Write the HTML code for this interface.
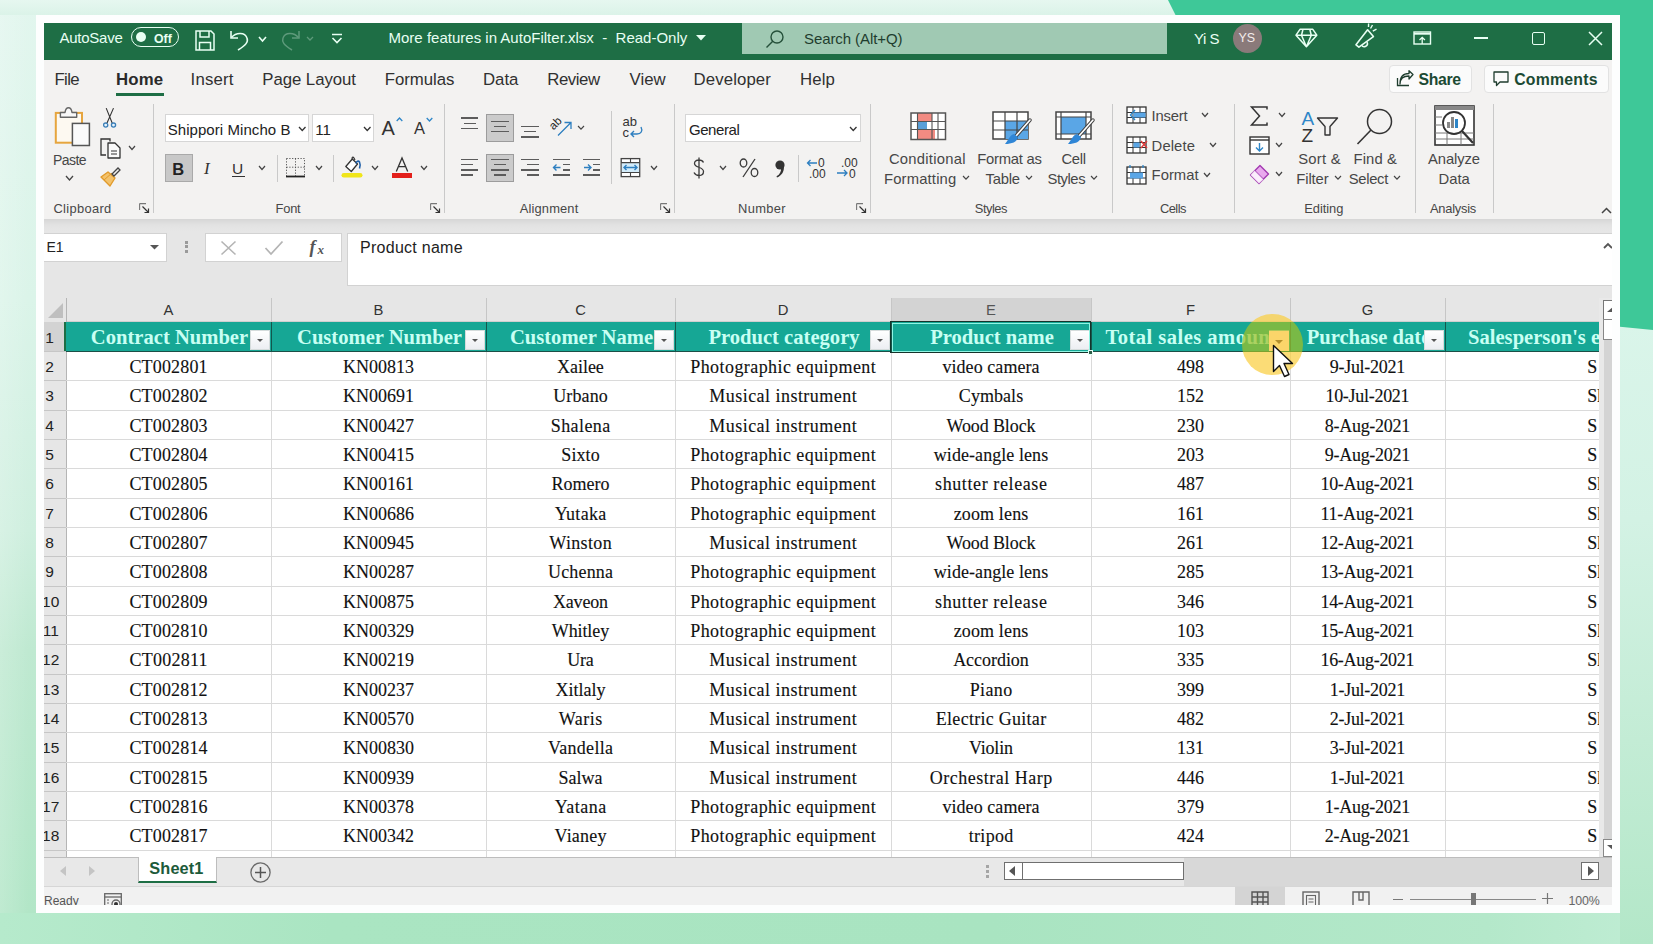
<!DOCTYPE html>
<html><head><meta charset="utf-8"><style>
*{margin:0;padding:0;box-sizing:border-box}
html,body{width:1653px;height:944px;overflow:hidden}
body{position:relative;font-family:"Liberation Sans",sans-serif;background:#d9f2e6}
.a{position:absolute}
svg.a{overflow:visible}
.t{position:absolute;white-space:pre;line-height:1}
.hd{font-family:"Liberation Serif",serif;font-weight:700;font-size:20.6px;color:#c8fff3}
.cd{font-family:"Liberation Serif",serif;font-size:18px;color:#111;-webkit-text-stroke:0.12px #111}
.rn{font-size:15.5px;color:#222}
.fb{width:20px;height:20px;background:linear-gradient(180deg,#ffffff,#eceef2);border:1px solid #d5dcdc}
.fb i{position:absolute;left:6px;top:8px;width:0;height:0;border-left:3.6px solid transparent;border-right:3.6px solid transparent;border-top:3.8px solid #555}
</style></head><body>
<div class="a" style="left:0;top:0;width:1653px;height:944px;background:linear-gradient(180deg,#e1f5ed 0px,#dcf3e9 240px,#d0efdf 480px,#bdead0 650px,#ade5c3 944px)"></div>
<div class="a" style="left:0;top:0;width:36px;height:913px;background:linear-gradient(180deg,#e2f6ee 0px,#dbf4e9 300px,#cfefdf 530px,#bfe9d1 650px,#b2e6c7 913px)"></div>
<div class="a" style="left:0;top:0;width:36px;height:913px;background:linear-gradient(90deg,rgba(255,255,255,0.18),rgba(255,255,255,0) 80%)"></div>
<div class="a" style="left:0;top:913px;width:1653px;height:31px;background:linear-gradient(90deg,#b6eacc 0%,#aae5c2 20%,#a9e4c1 60%,#b4e8ca 90%,#c0edd4 100%)"></div>
<div class="a" style="left:1620px;top:320px;width:33px;height:624px;background:linear-gradient(180deg,#daf5ea 0px,#d3f2e4 200px,#c3ecd5 420px,#b3e7c8 624px)"></div>
<div class="a" style="left:0;top:0;width:1653px;height:15px;background:linear-gradient(180deg,#e6f7f0,#dbf3e8)"></div>
<div class="a" style="left:0;top:0;width:1653px;height:944px;background:#3ec898;clip-path:polygon(1168px 0,1653px 0,1653px 330px,1620px 326.7px,1200px 64px)"></div>
<div class="a" style="left:36px;top:15px;width:1584px;height:898px;background:#fdfefe"></div>
<div class="a" style="left:44px;top:23px;width:1568px;height:882px;overflow:hidden;background:#f3f2f1">
<div class="a" style="left:0.0px;top:0.0px;width:1568.0px;height:36.8px;background:#1e6e45"></div>
<div class="t" style="left:15.5px;top:7.1px;font-size:15px;color:#e8fff3;font-weight:400;font-family:'Liberation Sans',sans-serif;letter-spacing:-0.256px;">AutoSave</div>
<div class="a" style="left:87.0px;top:4.0px;width:48.0px;height:20.0px;border:1.5px solid #e8fff3;border-radius:10px"></div>
<div class="a" style="left:92.0px;top:9.0px;width:10.0px;height:10.0px;background:#e8fff3;border-radius:50%"></div>
<div class="t" style="left:110.0px;top:9.6px;font-size:12.3px;color:#e8fff3;font-weight:700;font-family:'Liberation Sans',sans-serif;">Off</div>
<svg class="a" style="left:151.0px;top:6.5px;" width="20" height="21" viewBox="0 0 20 21" fill="none"><path d="M1 1 H16 L19 4 V20 H1 Z" stroke="#e8fff3" stroke-width="1.5"/><path d="M5 1 V7 H14 V1" stroke="#e8fff3" stroke-width="1.5"/><path d="M4.5 20 V12.5 H15.5 V20" stroke="#e8fff3" stroke-width="1.5"/></svg>
<svg class="a" style="left:185.0px;top:6.0px;" width="22" height="22" viewBox="0 0 22 22" fill="none"><path d="M2 2 V9 H9" stroke="#e8fff3" stroke-width="1.6" fill="none"/><path d="M2.5 8.5 C7 3 16 3 18 9 C19.5 13 17 16 9 21" stroke="#e8fff3" stroke-width="1.6" fill="none"/></svg>
<svg class="a" style="left:213.5px;top:12.5px;" width="9" height="6" viewBox="0 0 9 6" fill="none"><path d="M1 1 L4.5 5 L8 1" stroke="#e8fff3" stroke-width="1.6"/></svg>
<svg class="a" style="left:235.0px;top:6.0px;" width="22" height="22" viewBox="0 0 22 22" fill="none"><path d="M20 2 V9 H13" stroke="#5e9a7b" stroke-width="1.5" fill="none"/><path d="M19.5 8.5 C15 3 6 3 4 9 C2.5 13 5 16 13 21" stroke="#5e9a7b" stroke-width="1.5" fill="none"/></svg>
<svg class="a" style="left:262.0px;top:13.0px;" width="8" height="5" viewBox="0 0 8 5" fill="none"><path d="M1 1 L4.0 4 L7 1" stroke="#5e9a7b" stroke-width="1.3"/></svg>
<svg class="a" style="left:287.0px;top:10.0px;" width="12" height="11" viewBox="0 0 12 11" fill="none"><path d="M1 1.5 H11" stroke="#e8fff3" stroke-width="1.5"/><path d="M1.5 5 L6 9.5 L10.5 5" stroke="#e8fff3" stroke-width="1.6"/></svg>
<div class="t" style="left:344.5px;top:6.9px;font-size:15.0px;color:#e8fff3;font-weight:400;font-family:'Liberation Sans',sans-serif;letter-spacing:0.008px;">More features in AutoFilter.xlsx  -  Read-Only</div>
<svg class="a" style="left:652.0px;top:11.5px;" width="10" height="6" viewBox="0 0 10 6" fill="none"><path d="M0 0 H10 L5 5.5 Z" fill="#e8fff3"/></svg>
<div class="a" style="left:698.0px;top:0.0px;width:425.0px;height:31.0px;background:#a0c9b3"></div>
<svg class="a" style="left:721.0px;top:6.0px;" width="20" height="20" viewBox="0 0 20 20" fill="none"><circle cx="12" cy="8" r="6" stroke="#25503a" stroke-width="1.4"/><path d="M8 12 L1.5 18.5" stroke="#25503a" stroke-width="1.5"/></svg>
<div class="t" style="left:760.0px;top:7.8px;font-size:15px;color:#1f3d2e;font-weight:400;font-family:'Liberation Sans',sans-serif;letter-spacing:-0.087px;">Search (Alt+Q)</div>
<div class="t" style="left:1150.0px;top:7.6px;font-size:15px;color:#e8fff3;font-weight:400;font-family:'Liberation Sans',sans-serif;letter-spacing:-0.488px;">Yi S</div>
<div class="a" style="left:1189.0px;top:1.0px;width:29.0px;height:29.0px;background:#8a7a7a;border-radius:50%"></div>
<div class="t" style="left:1194.5px;top:9.4px;font-size:12.5px;color:#f3ecec;font-weight:400;font-family:'Liberation Sans',sans-serif;">YS</div>
<svg class="a" style="left:1251.0px;top:4.5px;" width="23" height="20" viewBox="0 0 23 20" fill="none"><path d="M5 1.3 H17.8 L21.8 7.2 L11.4 18.7 L1 7.2 Z M1 7.2 H21.8 M8 1.3 L6.5 7.2 L11.4 18.7 L16.3 7.2 L14.8 1.3" stroke="#e8fff3" stroke-width="1.5" fill="none" stroke-linejoin="round"/></svg>
<svg class="a" style="left:1306.0px;top:-1.0px;" width="30" height="28" viewBox="0 0 30 28" fill="none"><path d="M6 22.8 L17.6 7.8 L23.4 14.6 L8.9 25.2 Z" stroke="#e8fff3" stroke-width="1.6" fill="none" stroke-linejoin="round"/><path d="M11.5 23 A3 3 0 0 0 17 20" stroke="#e8fff3" stroke-width="1.5" fill="none"/><path d="M20.5 6.5 L22.5 3 M22.8 9.2 L26.5 7.2 M18.5 5 L18.6 1.5" stroke="#e8fff3" stroke-width="1.4"/></svg>
<svg class="a" style="left:1369.0px;top:8.0px;" width="19" height="14" viewBox="0 0 19 14" fill="none"><rect x="1" y="1" width="16.5" height="12" stroke="#e8fff3" stroke-width="1.4" fill="none"/><path d="M1 2.8 H17.5" stroke="#e8fff3" stroke-width="1.8"/><path d="M9.2 13 V6.5 M6.5 9 L9.2 6.3 L11.9 9" stroke="#e8fff3" stroke-width="1.3" fill="none"/></svg>
<div class="a" style="left:1430.0px;top:14.0px;width:14.0px;height:1.5px;background:#e8fff3"></div>
<div class="a" style="left:1487.5px;top:8.5px;width:13.5px;height:13.5px;border:1.5px solid #e8fff3;border-radius:2px"></div>
<svg class="a" style="left:1544.0px;top:7.5px;" width="15" height="15" viewBox="0 0 15 15" fill="none"><path d="M1 1 L14 14 M14 1 L1 14" stroke="#e8fff3" stroke-width="1.5"/></svg>
<div class="a" style="left:0.0px;top:36.8px;width:1568.0px;height:159.2px;background:#f3f2f1"></div>
<div class="t" style="left:10.5px;top:48.7px;font-size:16.8px;color:#303030;font-weight:400;font-family:'Liberation Sans',sans-serif;letter-spacing:-0.643px;">File</div>
<div class="t" style="left:146.6px;top:48.7px;font-size:16.8px;color:#303030;font-weight:400;font-family:'Liberation Sans',sans-serif;letter-spacing:0.164px;">Insert</div>
<div class="t" style="left:218.3px;top:48.7px;font-size:16.8px;color:#303030;font-weight:400;font-family:'Liberation Sans',sans-serif;letter-spacing:-0.059px;">Page Layout</div>
<div class="t" style="left:340.8px;top:48.7px;font-size:16.8px;color:#303030;font-weight:400;font-family:'Liberation Sans',sans-serif;letter-spacing:-0.052px;">Formulas</div>
<div class="t" style="left:439.0px;top:48.7px;font-size:16.8px;color:#303030;font-weight:400;font-family:'Liberation Sans',sans-serif;letter-spacing:0.003px;">Data</div>
<div class="t" style="left:503.2px;top:48.7px;font-size:16.8px;color:#303030;font-weight:400;font-family:'Liberation Sans',sans-serif;letter-spacing:-0.431px;">Review</div>
<div class="t" style="left:585.5px;top:48.7px;font-size:16.8px;color:#303030;font-weight:400;font-family:'Liberation Sans',sans-serif;letter-spacing:0.047px;">View</div>
<div class="t" style="left:649.6px;top:48.7px;font-size:16.8px;color:#303030;font-weight:400;font-family:'Liberation Sans',sans-serif;letter-spacing:0.091px;">Developer</div>
<div class="t" style="left:756.0px;top:48.7px;font-size:16.8px;color:#303030;font-weight:400;font-family:'Liberation Sans',sans-serif;letter-spacing:0.112px;">Help</div>
<div class="t" style="left:72.0px;top:48.7px;font-size:16.8px;color:#2a2a2a;font-weight:700;font-family:'Liberation Sans',sans-serif;letter-spacing:0.181px;">Home</div>
<div class="a" style="left:72.0px;top:70.0px;width:48.0px;height:3.0px;background:#1e6e45"></div>
<div class="a" style="left:1344.5px;top:42.0px;width:83.5px;height:28.0px;background:#fbfbfb;border:1px solid #e2e2e2;border-radius:4px"></div>
<svg class="a" style="left:1352.0px;top:47.0px;" width="18" height="17" viewBox="0 0 18 17" fill="none"><path d="M1.5 8 V15.5 H13" stroke="#1f3d2e" stroke-width="1.3" fill="none"/><path d="M4 14 C4 8 8 6 13 6 V9 L17 4.5 L13 0.8 V3.5 C7 3.5 4 7 4 14 Z" stroke="#1f3d2e" stroke-width="1.3" fill="none" stroke-linejoin="round"/></svg>
<div class="t" style="left:1374.5px;top:48.6px;font-size:15.8px;color:#1c4a33;font-weight:700;font-family:'Liberation Sans',sans-serif;letter-spacing:-0.343px;">Share</div>
<div class="a" style="left:1440.0px;top:42.0px;width:125.0px;height:28.0px;background:#fbfbfb;border:1px solid #e2e2e2;border-radius:4px"></div>
<svg class="a" style="left:1449.0px;top:48.0px;" width="16" height="16" viewBox="0 0 16 16" fill="none"><path d="M1 1 H15 V11 H7 L3.5 14.5 V11 H1 Z" stroke="#1f3d2e" stroke-width="1.3" fill="none" stroke-linejoin="round"/></svg>
<div class="t" style="left:1470.2px;top:48.6px;font-size:15.8px;color:#1c4a33;font-weight:700;font-family:'Liberation Sans',sans-serif;letter-spacing:0.232px;">Comments</div>
<div class="a" style="left:108.8px;top:81.0px;width:1.0px;height:109.0px;background:#c9c9c9"></div>
<div class="a" style="left:400.0px;top:81.0px;width:1.0px;height:109.0px;background:#c9c9c9"></div>
<div class="a" style="left:630.3px;top:81.0px;width:1.0px;height:109.0px;background:#c9c9c9"></div>
<div class="a" style="left:826.2px;top:81.0px;width:1.0px;height:109.0px;background:#c9c9c9"></div>
<div class="a" style="left:1067.9px;top:81.0px;width:1.0px;height:109.0px;background:#c9c9c9"></div>
<div class="a" style="left:1189.7px;top:81.0px;width:1.0px;height:109.0px;background:#c9c9c9"></div>
<div class="a" style="left:1371.2px;top:81.0px;width:1.0px;height:109.0px;background:#c9c9c9"></div>
<div class="a" style="left:1448.5px;top:81.0px;width:1.0px;height:109.0px;background:#c9c9c9"></div>
<svg class="a" style="left:10.0px;top:83.0px;" width="37" height="41" viewBox="0 0 37 41" fill="none"><rect x="1.8" y="6.9" width="26.2" height="29.8" fill="#fdf9f1" stroke="#e6a53e" stroke-width="2"/><path d="M6.4 11.3 V6.5 H11 C11.5 3.2 13 1.8 14.5 1.8 C16 1.8 17.5 3.2 18 6.5 H22.7 V11.3 Z" stroke="#666" stroke-width="1.4" fill="#f8f8f8" stroke-linejoin="round"/><rect x="18.4" y="17.4" width="17" height="22.1" fill="#fafafa" stroke="#555" stroke-width="1.5"/></svg>
<div class="t" style="left:9.0px;top:129.6px;font-size:14px;color:#474747;font-weight:400;font-family:'Liberation Sans',sans-serif;letter-spacing:-0.560px;">Paste</div>
<svg class="a" style="left:20.5px;top:151.5px;" width="9" height="6" viewBox="0 0 9 6" fill="none"><path d="M1 1 L4.5 5 L8 1" stroke="#444" stroke-width="1.3"/></svg>
<svg class="a" style="left:58.0px;top:84.0px;" width="16" height="21" viewBox="0 0 16 21" fill="none"><path d="M4.2 1.1 L10.3 16.2 M11.5 1.1 L4.9 16.2" stroke="#333" stroke-width="1.1"/><circle cx="3.7" cy="18.1" r="2.1" stroke="#3b7fb8" stroke-width="1.3" fill="#e8f4fc"/><circle cx="11.5" cy="18.1" r="2.1" stroke="#3b7fb8" stroke-width="1.3" fill="#e8f4fc"/></svg>
<svg class="a" style="left:55.5px;top:114.5px;" width="22" height="21" viewBox="0 0 22 21" fill="none"><path d="M10 3.5 V1 H1 V17 H6" stroke="#333" stroke-width="1.3" fill="none"/><path d="M8 5 H15 L20 10 V20 H8 Z" stroke="#333" stroke-width="1.3" fill="#fafafa" stroke-linejoin="round"/><path d="M11 13 H17 M11 16 H17" stroke="#333" stroke-width="1.1"/></svg>
<svg class="a" style="left:84.0px;top:122.2px;" width="8" height="5.5" viewBox="0 0 8 5.5" fill="none"><path d="M1 1 L4.0 4.5 L7 1" stroke="#444" stroke-width="1.2"/></svg>
<svg class="a" style="left:55.5px;top:144.0px;" width="22" height="20" viewBox="0 0 22 20" fill="none"><path d="M1 10 L10 19 L15 11 L8 5 Z" fill="#f3c26b" stroke="#e19a2a" stroke-width="1.4" stroke-linejoin="round"/><path d="M4 13 L12 6" stroke="#e19a2a" stroke-width="1"/><path d="M12 7 L14 9 L20 3 L18 1 Z" stroke="#444" stroke-width="1.3" fill="none"/></svg>
<div class="t" style="left:9.5px;top:180.3px;font-size:12.9px;color:#474747;font-weight:400;font-family:'Liberation Sans',sans-serif;letter-spacing:0.309px;">Clipboard</div>
<svg class="a" style="left:95.0px;top:180.0px;" width="11" height="11" viewBox="0 0 11 11" fill="none"><path d="M0.6 0.6 H7 M0.6 0.6 V7" stroke="#777" stroke-width="1.1"/><path d="M3.5 3.5 L9.5 9.5 M9.5 5.5 V9.5 H5.5" stroke="#333" stroke-width="1.2" fill="none"/></svg>
<div class="a" style="left:120.8px;top:90.6px;width:144.2px;height:28.4px;background:#fff;border:1px solid #d6d6d6"></div>
<div class="t" style="left:123.7px;top:98.8px;font-size:15px;color:#222;font-weight:400;font-family:'Liberation Sans',sans-serif;letter-spacing:0.063px;">Shippori Mincho B</div>
<svg class="a" style="left:253.8px;top:102.8px;" width="8.5" height="5.5" viewBox="0 0 8.5 5.5" fill="none"><path d="M1 1 L4.25 4.5 L7.5 1" stroke="#333" stroke-width="1.3"/></svg>
<div class="a" style="left:268.3px;top:90.6px;width:61.7px;height:28.4px;background:#fff;border:1px solid #d6d6d6"></div>
<div class="t" style="left:271.3px;top:98.7px;font-size:15.1px;color:#222;font-weight:400;font-family:'Liberation Sans',sans-serif;">11</div>
<svg class="a" style="left:318.8px;top:102.8px;" width="8.5" height="5.5" viewBox="0 0 8.5 5.5" fill="none"><path d="M1 1 L4.25 4.5 L7.5 1" stroke="#333" stroke-width="1.3"/></svg>
<div class="t" style="left:337.5px;top:94.5px;font-size:20px;color:#333;font-weight:400;font-family:'Liberation Sans',sans-serif;">A</div>
<svg class="a" style="left:352.0px;top:94.0px;" width="7" height="5" viewBox="0 0 7 5" fill="none"><path d="M0.7 4 L3.5 1 L6.3 4" stroke="#2e86c8" stroke-width="1.3"/></svg>
<div class="t" style="left:370.0px;top:97.4px;font-size:16.5px;color:#333;font-weight:400;font-family:'Liberation Sans',sans-serif;">A</div>
<svg class="a" style="left:382.0px;top:94.0px;" width="7" height="5" viewBox="0 0 7 5" fill="none"><path d="M0.7 1 L3.5 4 L6.3 1" stroke="#2e86c8" stroke-width="1.3"/></svg>
<div class="a" style="left:120.5px;top:131.0px;width:28.0px;height:28.3px;background:#c8c8c8;border:1px solid #a9a9a9"></div>
<div class="t" style="left:128.3px;top:138.0px;font-size:16.5px;color:#222;font-weight:700;font-family:'Liberation Sans',sans-serif;">B</div>
<div class="t" style="left:160.0px;top:137.3px;font-size:17px;color:#333;font-weight:400;font-family:'Liberation Serif',serif;font-style:italic">I</div>
<div class="t" style="left:188.0px;top:137.9px;font-size:15.5px;color:#333;font-weight:400;font-family:'Liberation Sans',sans-serif;">U</div>
<div class="a" style="left:188.0px;top:153.0px;width:13.0px;height:1.3px;background:#333"></div>
<svg class="a" style="left:213.5px;top:142.2px;" width="8" height="5.5" viewBox="0 0 8 5.5" fill="none"><path d="M1 1 L4.0 4.5 L7 1" stroke="#444" stroke-width="1.2"/></svg>
<div class="a" style="left:232.5px;top:131.5px;width:1.0px;height:27.5px;background:#c9c9c9"></div>
<svg class="a" style="left:241.0px;top:134.0px;" width="21" height="21" viewBox="0 0 21 21" fill="none"><path d="M1.5 1.5 H19.5 V19 M1.5 1.5 V19 M10.5 1.5 V19 M1.5 10.2 H19.5" stroke="#555" stroke-width="1" stroke-dasharray="1.2 1.6" fill="none"/><path d="M1 19.5 H20" stroke="#222" stroke-width="1.8"/></svg>
<svg class="a" style="left:270.5px;top:142.2px;" width="8" height="5.5" viewBox="0 0 8 5.5" fill="none"><path d="M1 1 L4.0 4.5 L7 1" stroke="#444" stroke-width="1.2"/></svg>
<div class="a" style="left:288.9px;top:131.5px;width:1.0px;height:27.5px;background:#c9c9c9"></div>
<svg class="a" style="left:296.0px;top:133.0px;" width="24" height="23" viewBox="0 0 24 23" fill="none"><path d="M5.8 10.5 L12.3 3 L17.5 8 L11.3 15.5 Z" stroke="#333" stroke-width="1.3" fill="#fff" stroke-linejoin="round"/><path d="M12.3 3 C11.5 1 13 0.5 14 2 L15 4" stroke="#333" stroke-width="1.2" fill="none"/><path d="M16 7.5 C16.5 5 18.5 4.5 19.5 6 C20.5 8 20 11 19.5 12.5" stroke="#1f5fa8" stroke-width="1.6" fill="none"/><rect x="1.5" y="17" width="21" height="4.6" rx="2.3" fill="#f0e51a"/></svg>
<svg class="a" style="left:326.5px;top:142.2px;" width="8" height="5.5" viewBox="0 0 8 5.5" fill="none"><path d="M1 1 L4.0 4.5 L7 1" stroke="#444" stroke-width="1.2"/></svg>
<svg class="a" style="left:351.0px;top:134.0px;" width="14" height="16" viewBox="0 0 14 16" fill="none"><path d="M1.3 14.5 L7 1 L12.7 14.5 M3.3 9.6 H10.7" stroke="#333" stroke-width="1.3" fill="none"/></svg>
<div class="a" style="left:348.0px;top:150.2px;width:19.7px;height:4.5px;background:#e3201b"></div>
<svg class="a" style="left:376.3px;top:142.2px;" width="8" height="5.5" viewBox="0 0 8 5.5" fill="none"><path d="M1 1 L4.0 4.5 L7 1" stroke="#444" stroke-width="1.2"/></svg>
<div class="t" style="left:231.6px;top:180.3px;font-size:12.9px;color:#474747;font-weight:400;font-family:'Liberation Sans',sans-serif;letter-spacing:-0.254px;">Font</div>
<svg class="a" style="left:386.0px;top:180.0px;" width="11" height="11" viewBox="0 0 11 11" fill="none"><path d="M0.6 0.6 H7 M0.6 0.6 V7" stroke="#777" stroke-width="1.1"/><path d="M3.5 3.5 L9.5 9.5 M9.5 5.5 V9.5 H5.5" stroke="#333" stroke-width="1.2" fill="none"/></svg>
<div class="a" style="left:416.6px;top:94.3px;width:17.4px;height:1.3px;background:#5c5c5c"></div>
<div class="a" style="left:419.5px;top:99.5px;width:12.1px;height:1.3px;background:#5c5c5c"></div>
<div class="a" style="left:416.6px;top:104.5px;width:17.4px;height:1.3px;background:#5c5c5c"></div>
<div class="a" style="left:441.8px;top:90.6px;width:28.2px;height:28.9px;background:#cbcbcb;border:1px solid #9c9c9c"></div>
<div class="a" style="left:447.0px;top:98.0px;width:17.6px;height:1.3px;background:#5c5c5c"></div>
<div class="a" style="left:449.6px;top:103.1px;width:12.4px;height:1.3px;background:#5c5c5c"></div>
<div class="a" style="left:447.0px;top:108.2px;width:17.6px;height:1.3px;background:#5c5c5c"></div>
<div class="a" style="left:477.0px;top:103.1px;width:17.9px;height:1.3px;background:#5c5c5c"></div>
<div class="a" style="left:480.0px;top:108.2px;width:12.0px;height:1.3px;background:#5c5c5c"></div>
<div class="a" style="left:477.0px;top:113.3px;width:17.9px;height:1.3px;background:#5c5c5c"></div>
<svg class="a" style="left:505.0px;top:91.0px;" width="26" height="24" viewBox="0 0 26 24" fill="none"><text x="0" y="0" font-size="11.5" font-family="Liberation Sans" fill="#222" transform="translate(4.5,16.5) rotate(-45)">ab</text><path d="M9 21.5 L21.5 9 M15.5 8.5 H22 V15" stroke="#2e7fc0" stroke-width="1.3" fill="none"/></svg>
<svg class="a" style="left:533.0px;top:102.4px;" width="8" height="5.2" viewBox="0 0 8 5.2" fill="none"><path d="M1 1 L4.0 4.2 L7 1" stroke="#444" stroke-width="1.2"/></svg>
<div class="a" style="left:567.2px;top:88.0px;width:1.0px;height:73.0px;background:#c9c9c9"></div>
<svg class="a" style="left:578.0px;top:93.0px;" width="24" height="24" viewBox="0 0 24 24" fill="none"><text x="0.5" y="10" font-size="13" font-family="Liberation Sans" fill="#333">ab</text><text x="0.5" y="21" font-size="13" font-family="Liberation Sans" fill="#333">c</text><path d="M19 11 C21 15 19 18 15 18 H9 M12 15 L9 18 L12 21" stroke="#2e7fc0" stroke-width="1.4" fill="none"/></svg>
<div class="a" style="left:416.6px;top:136.0px;width:17.7px;height:1.3px;background:#5c5c5c"></div>
<div class="a" style="left:416.6px;top:141.2px;width:12.4px;height:1.3px;background:#5c5c5c"></div>
<div class="a" style="left:416.6px;top:146.3px;width:17.7px;height:1.3px;background:#5c5c5c"></div>
<div class="a" style="left:416.6px;top:151.3px;width:12.4px;height:1.3px;background:#5c5c5c"></div>
<div class="a" style="left:441.8px;top:131.4px;width:28.2px;height:28.1px;background:#cbcbcb;border:1px solid #9c9c9c"></div>
<div class="a" style="left:447.0px;top:136.0px;width:17.6px;height:1.3px;background:#5c5c5c"></div>
<div class="a" style="left:449.6px;top:141.2px;width:12.4px;height:1.3px;background:#5c5c5c"></div>
<div class="a" style="left:447.0px;top:146.3px;width:17.6px;height:1.3px;background:#5c5c5c"></div>
<div class="a" style="left:449.6px;top:151.3px;width:12.4px;height:1.3px;background:#5c5c5c"></div>
<div class="a" style="left:477.0px;top:136.0px;width:18.0px;height:1.3px;background:#5c5c5c"></div>
<div class="a" style="left:482.5px;top:141.2px;width:12.5px;height:1.3px;background:#5c5c5c"></div>
<div class="a" style="left:477.0px;top:146.3px;width:18.0px;height:1.3px;background:#5c5c5c"></div>
<div class="a" style="left:482.5px;top:151.3px;width:12.5px;height:1.3px;background:#5c5c5c"></div>
<div class="a" style="left:508.6px;top:136.0px;width:17.4px;height:1.3px;background:#5c5c5c"></div>
<div class="a" style="left:519.0px;top:141.2px;width:7.0px;height:1.3px;background:#5c5c5c"></div>
<div class="a" style="left:519.0px;top:146.3px;width:7.0px;height:1.3px;background:#5c5c5c"></div>
<div class="a" style="left:508.6px;top:151.3px;width:17.4px;height:1.3px;background:#5c5c5c"></div>
<svg class="a" style="left:508.0px;top:140.0px;" width="10" height="9" viewBox="0 0 10 9" fill="none"><path d="M8.5 4.5 H1.5 M4.5 1.5 L1.5 4.5 L4.5 7.5" stroke="#2e7fc0" stroke-width="1.4" fill="none"/></svg>
<div class="a" style="left:538.8px;top:136.0px;width:17.7px;height:1.3px;background:#5c5c5c"></div>
<div class="a" style="left:549.3px;top:141.2px;width:7.2px;height:1.3px;background:#5c5c5c"></div>
<div class="a" style="left:549.3px;top:146.3px;width:7.2px;height:1.3px;background:#5c5c5c"></div>
<div class="a" style="left:538.8px;top:151.3px;width:17.7px;height:1.3px;background:#5c5c5c"></div>
<svg class="a" style="left:538.5px;top:140.0px;" width="10" height="9" viewBox="0 0 10 9" fill="none"><path d="M1 4.5 H8 M5 1.5 L8 4.5 L5 7.5" stroke="#2e7fc0" stroke-width="1.4" fill="none"/></svg>
<svg class="a" style="left:576.0px;top:134.0px;" width="21" height="21" viewBox="0 0 21 21" fill="none"><rect x="1.2" y="1.6" width="18.5" height="18" fill="#fff" stroke="#444" stroke-width="1.3"/><rect x="1.8" y="5.6" width="17.3" height="9.8" fill="#d3ecfa"/><path d="M1.2 5.6 H19.7 M1.2 15.5 H19.7 M10.5 1.6 V5.6 M10.5 15.5 V19.6" stroke="#444" stroke-width="1.1"/><path d="M4 10.5 H17 M6.5 8 L4 10.5 L6.5 13 M14.5 8 L17 10.5 L14.5 13" stroke="#2e7fc0" stroke-width="1.4" fill="none"/></svg>
<svg class="a" style="left:606.0px;top:142.2px;" width="8" height="5.5" viewBox="0 0 8 5.5" fill="none"><path d="M1 1 L4.0 4.5 L7 1" stroke="#444" stroke-width="1.2"/></svg>
<div class="t" style="left:475.8px;top:180.3px;font-size:12.9px;color:#474747;font-weight:400;font-family:'Liberation Sans',sans-serif;letter-spacing:0.137px;">Alignment</div>
<svg class="a" style="left:616.0px;top:180.0px;" width="11" height="11" viewBox="0 0 11 11" fill="none"><path d="M0.6 0.6 H7 M0.6 0.6 V7" stroke="#777" stroke-width="1.1"/><path d="M3.5 3.5 L9.5 9.5 M9.5 5.5 V9.5 H5.5" stroke="#333" stroke-width="1.2" fill="none"/></svg>
<div class="a" style="left:641.4px;top:90.6px;width:175.6px;height:28.8px;background:#fff;border:1px solid #d6d6d6"></div>
<div class="t" style="left:644.9px;top:98.8px;font-size:15px;color:#222;font-weight:400;font-family:'Liberation Sans',sans-serif;letter-spacing:-0.409px;">General</div>
<svg class="a" style="left:805.0px;top:102.8px;" width="8.5" height="5.5" viewBox="0 0 8.5 5.5" fill="none"><path d="M1 1 L4.25 4.5 L7.5 1" stroke="#333" stroke-width="1.3"/></svg>
<svg class="a" style="left:648.0px;top:134.0px;" width="14" height="22" viewBox="0 0 14 22" fill="none"><path d="M11.5 5.5 C10.5 3.5 9 3 7 3 C4 3 2.5 4.5 2.5 6.5 C2.5 11 11.5 9.5 11.5 14.5 C11.5 17 9.5 18.5 7 18.5 C4.5 18.5 3 17.5 2 15.5 M7 0.5 V21.5" stroke="#3a3a3a" stroke-width="1.3" fill="none"/></svg>
<svg class="a" style="left:674.5px;top:142.2px;" width="8" height="5.5" viewBox="0 0 8 5.5" fill="none"><path d="M1 1 L4.0 4.5 L7 1" stroke="#444" stroke-width="1.2"/></svg>
<svg class="a" style="left:694.5px;top:135.0px;" width="21" height="20" viewBox="0 0 21 20" fill="none"><ellipse cx="4.5" cy="5" rx="3.3" ry="4" stroke="#3a3a3a" stroke-width="1.3"/><ellipse cx="15.5" cy="14.5" rx="3.3" ry="4" stroke="#3a3a3a" stroke-width="1.3"/><path d="M16 1 L4 19" stroke="#3a3a3a" stroke-width="1.3"/></svg>
<svg class="a" style="left:730.0px;top:136.0px;" width="12" height="20" viewBox="0 0 12 20" fill="none"><circle cx="6" cy="6" r="4.6" fill="#333"/><path d="M9.8 7 C10.5 12 8 16.5 3 18.5 L2.5 17.3 C6 15.5 7.5 12 7 9 Z" fill="#333"/></svg>
<div class="a" style="left:754.3px;top:132.0px;width:1.0px;height:26.5px;background:#c9c9c9"></div>
<svg class="a" style="left:762.0px;top:133.0px;" width="22" height="24" viewBox="0 0 22 24" fill="none"><path d="M11 7 H1.5 M4.5 4 L1.5 7 L4.5 10" stroke="#2e7fc0" stroke-width="1.3" fill="none"/><text x="12" y="11" font-size="12" font-family="Liberation Sans" fill="#333">0</text><text x="3" y="21.5" font-size="12" font-family="Liberation Sans" fill="#333">.00</text></svg>
<svg class="a" style="left:792.0px;top:133.0px;" width="24" height="24" viewBox="0 0 24 24" fill="none"><text x="5" y="11" font-size="12" font-family="Liberation Sans" fill="#333">.00</text><path d="M1 17 H11 M8 14 L11 17 L8 20" stroke="#2e7fc0" stroke-width="1.3" fill="none"/><text x="13" y="21.5" font-size="12" font-family="Liberation Sans" fill="#333">0</text></svg>
<div class="t" style="left:694.0px;top:180.3px;font-size:12.9px;color:#474747;font-weight:400;font-family:'Liberation Sans',sans-serif;letter-spacing:0.353px;">Number</div>
<svg class="a" style="left:812.0px;top:180.0px;" width="11" height="11" viewBox="0 0 11 11" fill="none"><path d="M0.6 0.6 H7 M0.6 0.6 V7" stroke="#777" stroke-width="1.1"/><path d="M3.5 3.5 L9.5 9.5 M9.5 5.5 V9.5 H5.5" stroke="#333" stroke-width="1.2" fill="none"/></svg>
<svg class="a" style="left:866.0px;top:88.5px;" width="37" height="29" viewBox="0 0 37 29" fill="none"><rect x="1" y="1" width="34.5" height="26.5" fill="#fff"/><rect x="7.5" y="1" width="14.5" height="8.5" fill="#f28b82"/><rect x="7.5" y="9.5" width="9.5" height="8" fill="#5a9fd8"/><rect x="7.5" y="17.5" width="17.5" height="9.5" fill="#f28b82"/><path d="M7.5 1 V27.5 M22 1 V27.5 M28 1 V27.5 M1 9.5 H35.5 M1 17.5 H35.5" stroke="#555" stroke-width="1.1"/><rect x="1" y="1" width="34.5" height="26.5" stroke="#555" stroke-width="1.5" fill="none"/></svg>
<div class="t" style="left:844.9px;top:129.3px;font-size:14.8px;color:#474747;font-weight:400;font-family:'Liberation Sans',sans-serif;letter-spacing:0.250px;">Conditional</div>
<div class="t" style="left:840.0px;top:149.0px;font-size:14.8px;color:#474747;font-weight:400;font-family:'Liberation Sans',sans-serif;letter-spacing:0.167px;">Formatting</div>
<svg class="a" style="left:918.2px;top:151.9px;" width="8" height="5.2" viewBox="0 0 8 5.2" fill="none"><path d="M1 1 L4.0 4.2 L7 1" stroke="#444" stroke-width="1.2"/></svg>
<svg class="a" style="left:947.5px;top:88.0px;" width="40" height="35" viewBox="0 0 40 35" fill="none"><rect x="1" y="1" width="35" height="27" fill="#fff" stroke="#444" stroke-width="1.5"/><rect x="13" y="10" width="23" height="18" fill="#5aa6e6"/><path d="M13 1 V28 M25 1 V28 M1 10 H36 M1 19 H36" stroke="#444" stroke-width="1.2"/><path d="M38 9 L24 25" stroke="#444" stroke-width="3.5" stroke-linecap="round"/><path d="M38 9 L24 25" stroke="#fff" stroke-width="1.6" stroke-linecap="round"/><path d="M22 23 C18 24 17 28 13 33 C20 33 25 31 26 26 Z" fill="#2f86d6"/></svg>
<div class="t" style="left:933.3px;top:129.3px;font-size:14.8px;color:#474747;font-weight:400;font-family:'Liberation Sans',sans-serif;letter-spacing:-0.246px;">Format as</div>
<div class="t" style="left:941.6px;top:149.0px;font-size:14.8px;color:#474747;font-weight:400;font-family:'Liberation Sans',sans-serif;letter-spacing:-0.256px;">Table</div>
<svg class="a" style="left:980.7px;top:151.9px;" width="8" height="5.2" viewBox="0 0 8 5.2" fill="none"><path d="M1 1 L4.0 4.2 L7 1" stroke="#444" stroke-width="1.2"/></svg>
<svg class="a" style="left:1011.0px;top:88.0px;" width="40" height="35" viewBox="0 0 40 35" fill="none"><rect x="1" y="1" width="35" height="27" fill="#fff" stroke="#444" stroke-width="1.5"/><rect x="6" y="6" width="25" height="17" fill="#5aa6e6"/><path d="M1 6 H36 M1 23 H36 M6 1 V28 M31 1 V28" stroke="#444" stroke-width="1.2"/><path d="M38 9 L24 25" stroke="#444" stroke-width="3.5" stroke-linecap="round"/><path d="M38 9 L24 25" stroke="#fff" stroke-width="1.6" stroke-linecap="round"/><path d="M22 23 C18 24 17 28 13 33 C20 33 25 31 26 26 Z" fill="#2f86d6"/></svg>
<div class="t" style="left:1017.4px;top:129.3px;font-size:14.8px;color:#474747;font-weight:400;font-family:'Liberation Sans',sans-serif;letter-spacing:-0.274px;">Cell</div>
<div class="t" style="left:1003.5px;top:149.0px;font-size:14.8px;color:#474747;font-weight:400;font-family:'Liberation Sans',sans-serif;letter-spacing:-0.451px;">Styles</div>
<svg class="a" style="left:1046.0px;top:151.9px;" width="8" height="5.2" viewBox="0 0 8 5.2" fill="none"><path d="M1 1 L4.0 4.2 L7 1" stroke="#444" stroke-width="1.2"/></svg>
<div class="t" style="left:930.8px;top:180.3px;font-size:12.9px;color:#474747;font-weight:400;font-family:'Liberation Sans',sans-serif;letter-spacing:-0.488px;">Styles</div>
<svg class="a" style="left:1082.0px;top:83.0px;" width="21" height="19" viewBox="0 0 21 19" fill="none"><rect x="1" y="1" width="19" height="16" fill="#fff" stroke="#333" stroke-width="1.3"/><path d="M1 6.5 H20 M1 11.5 H20 M7 1 V17 M14 1 V17" stroke="#333" stroke-width="1"/><rect x="7.5" y="6.5" width="12" height="5" fill="#5aa6e6"/><path d="M9 4 L4.5 9 L9 14" stroke="#2e86c8" stroke-width="1.4" fill="none"/></svg>
<div class="t" style="left:1107.6px;top:86.1px;font-size:14.8px;color:#474747;font-weight:400;font-family:'Liberation Sans',sans-serif;letter-spacing:-0.203px;">Insert</div>
<svg class="a" style="left:1157.3px;top:89.2px;" width="8" height="5.5" viewBox="0 0 8 5.5" fill="none"><path d="M1 1 L4.0 4.5 L7 1" stroke="#444" stroke-width="1.2"/></svg>
<svg class="a" style="left:1082.0px;top:113.0px;" width="22" height="19" viewBox="0 0 22 19" fill="none"><rect x="1" y="1" width="19" height="16" fill="#fff" stroke="#333" stroke-width="1.3"/><path d="M1 6.5 H20 M1 11.5 H20 M7 1 V17 M14 1 V17" stroke="#333" stroke-width="1"/><rect x="7.5" y="6.5" width="6" height="5" fill="#5aa6e6"/><path d="M15 5 L21 12 M21 5 L15 12" stroke="#e03c3c" stroke-width="1.4"/></svg>
<div class="t" style="left:1107.6px;top:115.7px;font-size:14.8px;color:#474747;font-weight:400;font-family:'Liberation Sans',sans-serif;letter-spacing:0.103px;">Delete</div>
<svg class="a" style="left:1165.3px;top:119.2px;" width="8" height="5.5" viewBox="0 0 8 5.5" fill="none"><path d="M1 1 L4.0 4.5 L7 1" stroke="#444" stroke-width="1.2"/></svg>
<svg class="a" style="left:1082.0px;top:141.0px;" width="21" height="21" viewBox="0 0 21 21" fill="none"><rect x="1" y="3" width="19" height="17" fill="#fff" stroke="#333" stroke-width="1.3"/><path d="M1 8.5 H20 M1 14 H20 M7 3 V20 M14 3 V20" stroke="#333" stroke-width="1"/><rect x="4" y="8.5" width="13" height="6" fill="#5aa6e6"/><path d="M4 1 V4 M17 1 V4" stroke="#2e86c8" stroke-width="1.3"/></svg>
<div class="t" style="left:1107.6px;top:144.9px;font-size:14.8px;color:#474747;font-weight:400;font-family:'Liberation Sans',sans-serif;letter-spacing:0.021px;">Format</div>
<svg class="a" style="left:1159.0px;top:148.8px;" width="8" height="5.5" viewBox="0 0 8 5.5" fill="none"><path d="M1 1 L4.0 4.5 L7 1" stroke="#444" stroke-width="1.2"/></svg>
<div class="t" style="left:1115.9px;top:180.3px;font-size:12.9px;color:#474747;font-weight:400;font-family:'Liberation Sans',sans-serif;letter-spacing:-0.514px;">Cells</div>
<svg class="a" style="left:1206.0px;top:83.0px;" width="19" height="20" viewBox="0 0 19 20" fill="none"><path d="M17 3.5 V1 H1.5 L9.5 10 L1.5 19 H17 V16.5" stroke="#333" stroke-width="1.5" fill="none" stroke-linejoin="miter"/></svg>
<svg class="a" style="left:1234.0px;top:89.2px;" width="8" height="5.5" viewBox="0 0 8 5.5" fill="none"><path d="M1 1 L4.0 4.5 L7 1" stroke="#444" stroke-width="1.2"/></svg>
<svg class="a" style="left:1204.5px;top:113.0px;" width="21" height="19" viewBox="0 0 21 19" fill="none"><rect x="1" y="1" width="19" height="17" fill="#fff" stroke="#333" stroke-width="1.4"/><path d="M1 4 H20" stroke="#333" stroke-width="1.4"/><path d="M10.5 7 V15 M7 11.5 L10.5 15 L14 11.5" stroke="#2e86c8" stroke-width="1.4" fill="none"/></svg>
<svg class="a" style="left:1231.3px;top:119.2px;" width="8" height="5.5" viewBox="0 0 8 5.5" fill="none"><path d="M1 1 L4.0 4.5 L7 1" stroke="#444" stroke-width="1.2"/></svg>
<svg class="a" style="left:1204.5px;top:141.0px;" width="21" height="21" viewBox="0 0 21 21" fill="none"><path d="M1.5 11 L11 1.5 L19.5 10 L10 19.5 Z" fill="#e9a9ee" stroke="#a23ab1" stroke-width="1.4" stroke-linejoin="round"/><path d="M5.5 6.5 L14.5 15.5" stroke="#a23ab1" stroke-width="1.2"/><path d="M1.5 11 L5.5 6.5 L14.5 15.5 L10 19.5 Z" fill="#fff" opacity="0.8"/></svg>
<svg class="a" style="left:1231.3px;top:148.2px;" width="8" height="5.5" viewBox="0 0 8 5.5" fill="none"><path d="M1 1 L4.0 4.5 L7 1" stroke="#444" stroke-width="1.2"/></svg>
<svg class="a" style="left:1256.0px;top:85.0px;" width="40" height="36" viewBox="0 0 40 36" fill="none"><text x="1.5" y="16.5" font-size="19" font-family="Liberation Sans" fill="#2e86c8">A</text><text x="1.5" y="34" font-size="19" font-family="Liberation Sans" fill="#333">Z</text><path d="M17.5 10 H37.5 L30 18.5 V27 H25 V18.5 Z" stroke="#333" stroke-width="1.4" fill="none" stroke-linejoin="round"/></svg>
<div class="t" style="left:1254.2px;top:129.3px;font-size:14.8px;color:#474747;font-weight:400;font-family:'Liberation Sans',sans-serif;letter-spacing:0.245px;">Sort &amp;</div>
<div class="t" style="left:1252.3px;top:149.1px;font-size:14.8px;color:#474747;font-weight:400;font-family:'Liberation Sans',sans-serif;letter-spacing:-0.115px;">Filter</div>
<svg class="a" style="left:1290.3px;top:151.9px;" width="8" height="5.2" viewBox="0 0 8 5.2" fill="none"><path d="M1 1 L4.0 4.2 L7 1" stroke="#444" stroke-width="1.2"/></svg>
<svg class="a" style="left:1311.5px;top:84.5px;" width="38" height="38" viewBox="0 0 38 38" fill="none"><circle cx="23.5" cy="13.5" r="12" stroke="#333" stroke-width="1.5"/><path d="M15 22 L1.5 36" stroke="#333" stroke-width="1.6"/></svg>
<div class="t" style="left:1309.5px;top:129.3px;font-size:14.8px;color:#474747;font-weight:400;font-family:'Liberation Sans',sans-serif;letter-spacing:0.138px;">Find &amp;</div>
<div class="t" style="left:1304.7px;top:149.1px;font-size:14.8px;color:#474747;font-weight:400;font-family:'Liberation Sans',sans-serif;letter-spacing:-0.306px;">Select</div>
<svg class="a" style="left:1348.9px;top:151.9px;" width="8" height="5.2" viewBox="0 0 8 5.2" fill="none"><path d="M1 1 L4.0 4.2 L7 1" stroke="#444" stroke-width="1.2"/></svg>
<div class="t" style="left:1260.3px;top:180.3px;font-size:12.9px;color:#474747;font-weight:400;font-family:'Liberation Sans',sans-serif;letter-spacing:-0.063px;">Editing</div>
<svg class="a" style="left:1389.5px;top:82.0px;" width="42" height="42" viewBox="0 0 42 42" fill="none"><rect x="1" y="1" width="39" height="39" fill="#fff" stroke="#333" stroke-width="1.6"/><rect x="1" y="1" width="39" height="4" fill="#888"/><path d="M1 28 H40 M1 34 H40 M13 28 V40 M27 28 V40 M1 12 H8 M1 20 H8" stroke="#777" stroke-width="1"/><circle cx="20" cy="18" r="11" fill="#fff" stroke="#333" stroke-width="1.8"/><path d="M28 26 L39 38" stroke="#333" stroke-width="2.2"/><rect x="13" y="17" width="3" height="6" fill="#888"/><rect x="17" y="12" width="3" height="11" fill="#888"/><rect x="21" y="14" width="3" height="9" fill="#2e86c8"/></svg>
<div class="t" style="left:1384.0px;top:129.3px;font-size:14.8px;color:#474747;font-weight:400;font-family:'Liberation Sans',sans-serif;letter-spacing:-0.093px;">Analyze</div>
<div class="t" style="left:1394.6px;top:149.1px;font-size:14.8px;color:#474747;font-weight:400;font-family:'Liberation Sans',sans-serif;letter-spacing:-0.041px;">Data</div>
<div class="t" style="left:1386.0px;top:180.3px;font-size:12.9px;color:#474747;font-weight:400;font-family:'Liberation Sans',sans-serif;letter-spacing:-0.255px;">Analysis</div>
<svg class="a" style="left:1557.0px;top:184.0px;" width="11" height="7" viewBox="0 0 11 7" fill="none"><path d="M1 6 L5.5 1.5 L10 6" stroke="#444" stroke-width="1.5" fill="none"/></svg>
<div class="a" style="left:0.0px;top:196.0px;width:1568.0px;height:79.0px;background:linear-gradient(180deg,#d6d6d6 0px,#e2e2e2 6px,#e6e6e6 12px,#e6e6e6 100%)"></div>
<div class="a" style="left:-4.0px;top:209.5px;width:127.0px;height:29.0px;background:#fff;border:1px solid #d2d2d2"></div>
<div class="t" style="left:2.5px;top:217.1px;font-size:14.0px;color:#222;font-weight:400;font-family:'Liberation Sans',sans-serif;">E1</div>
<svg class="a" style="left:106.0px;top:222.0px;" width="9" height="5" viewBox="0 0 9 5" fill="none"><path d="M0 0 H9 L4.5 4.5 Z" fill="#555"/></svg>
<div class="a" style="left:141.0px;top:217.5px;width:3.0px;height:3.0px;background:#9a9a9a"></div>
<div class="a" style="left:141.0px;top:222.3px;width:3.0px;height:3.0px;background:#9a9a9a"></div>
<div class="a" style="left:141.0px;top:227.1px;width:3.0px;height:3.0px;background:#9a9a9a"></div>
<div class="a" style="left:161.0px;top:209.5px;width:137.0px;height:29.0px;background:#fff;border:1px solid #d2d2d2"></div>
<svg class="a" style="left:175.5px;top:216.5px;" width="17" height="16" viewBox="0 0 17 16" fill="none"><path d="M1.5 1.5 L15.5 14.5 M15.5 1.5 L1.5 14.5" stroke="#b4b4b4" stroke-width="1.6"/></svg>
<svg class="a" style="left:220.0px;top:217.0px;" width="20" height="16" viewBox="0 0 20 16" fill="none"><path d="M1.5 8 L7 14 L18.5 1.5" stroke="#b4b4b4" stroke-width="1.8" fill="none"/></svg>
<div class="t" style="left:265.5px;top:214.9px;font-size:18px;color:#555;font-weight:700;font-family:'Liberation Serif',serif;font-style:italic">f</div>
<div class="t" style="left:273.5px;top:219.6px;font-size:13px;color:#555;font-weight:700;font-family:'Liberation Serif',serif;font-style:italic">x</div>
<div class="a" style="left:303.0px;top:209.5px;width:1273.0px;height:53.0px;background:#fff;border:1px solid #d2d2d2"></div>
<div class="t" style="left:316.0px;top:216.5px;font-size:16px;color:#222;font-weight:400;font-family:'Liberation Sans',sans-serif;letter-spacing:0.274px;">Product name</div>
<svg class="a" style="left:1559.0px;top:219.0px;" width="10" height="7" viewBox="0 0 10 7" fill="none"><path d="M1 6 L5 2 L9 6" stroke="#555" stroke-width="1.8" fill="none"/></svg>
<div class="a" style="left:0;top:0;width:1555px;height:834px;overflow:hidden">
<div class="a" style="left:0;top:275px;width:1555px;height:559px;background:#fff"></div>
<div class="a" style="left:0;top:275px;width:1555px;height:24px;background:#e6e6e6;border-bottom:1px solid #cfcfcf"></div>
<div class="a" style="left:0;top:275px;width:23px;height:559px;background:#e6e6e6;border-right:1px solid #b5b5b5"></div>
<div class="a" style="left:4px;top:280px;width:15px;height:15px;background:#bfbfbf;clip-path:polygon(100% 0,100% 100%,0 100%)"></div>
<div class="a" style="left:847px;top:275px;width:200px;height:24px;background:#d3d3d3"></div>
<div class="t" style="left:22px;top:279.5px;width:205px;text-align:center;font-size:14.8px;color:#333">A</div>
<div class="a" style="left:227px;top:275px;width:1px;height:24px;background:#c6c6c6"></div>
<div class="t" style="left:227px;top:279.5px;width:215px;text-align:center;font-size:14.8px;color:#333">B</div>
<div class="a" style="left:442px;top:275px;width:1px;height:24px;background:#c6c6c6"></div>
<div class="t" style="left:442px;top:279.5px;width:189px;text-align:center;font-size:14.8px;color:#333">C</div>
<div class="a" style="left:631px;top:275px;width:1px;height:24px;background:#c6c6c6"></div>
<div class="t" style="left:631px;top:279.5px;width:216px;text-align:center;font-size:14.8px;color:#333">D</div>
<div class="a" style="left:847px;top:275px;width:1px;height:24px;background:#c6c6c6"></div>
<div class="t" style="left:847px;top:279.5px;width:200px;text-align:center;font-size:14.8px;color:#555">E</div>
<div class="a" style="left:1047px;top:275px;width:1px;height:24px;background:#c6c6c6"></div>
<div class="t" style="left:1047px;top:279.5px;width:199px;text-align:center;font-size:14.8px;color:#333">F</div>
<div class="a" style="left:1246px;top:275px;width:1px;height:24px;background:#c6c6c6"></div>
<div class="t" style="left:1246px;top:279.5px;width:155px;text-align:center;font-size:14.8px;color:#333">G</div>
<div class="a" style="left:1401px;top:275px;width:1px;height:24px;background:#c6c6c6"></div>
<div class="a" style="left:22px;top:357px;width:1533px;height:1px;background:#dadada"></div>
<div class="a" style="left:0;top:357px;width:22px;height:1px;background:#c6c6c6"></div>
<div class="a" style="left:22px;top:387px;width:1533px;height:1px;background:#dadada"></div>
<div class="a" style="left:0;top:387px;width:22px;height:1px;background:#c6c6c6"></div>
<div class="a" style="left:22px;top:416px;width:1533px;height:1px;background:#dadada"></div>
<div class="a" style="left:0;top:416px;width:22px;height:1px;background:#c6c6c6"></div>
<div class="a" style="left:22px;top:445px;width:1533px;height:1px;background:#dadada"></div>
<div class="a" style="left:0;top:445px;width:22px;height:1px;background:#c6c6c6"></div>
<div class="a" style="left:22px;top:475px;width:1533px;height:1px;background:#dadada"></div>
<div class="a" style="left:0;top:475px;width:22px;height:1px;background:#c6c6c6"></div>
<div class="a" style="left:22px;top:504px;width:1533px;height:1px;background:#dadada"></div>
<div class="a" style="left:0;top:504px;width:22px;height:1px;background:#c6c6c6"></div>
<div class="a" style="left:22px;top:533px;width:1533px;height:1px;background:#dadada"></div>
<div class="a" style="left:0;top:533px;width:22px;height:1px;background:#c6c6c6"></div>
<div class="a" style="left:22px;top:563px;width:1533px;height:1px;background:#dadada"></div>
<div class="a" style="left:0;top:563px;width:22px;height:1px;background:#c6c6c6"></div>
<div class="a" style="left:22px;top:592px;width:1533px;height:1px;background:#dadada"></div>
<div class="a" style="left:0;top:592px;width:22px;height:1px;background:#c6c6c6"></div>
<div class="a" style="left:22px;top:621px;width:1533px;height:1px;background:#dadada"></div>
<div class="a" style="left:0;top:621px;width:22px;height:1px;background:#c6c6c6"></div>
<div class="a" style="left:22px;top:651px;width:1533px;height:1px;background:#dadada"></div>
<div class="a" style="left:0;top:651px;width:22px;height:1px;background:#c6c6c6"></div>
<div class="a" style="left:22px;top:680px;width:1533px;height:1px;background:#dadada"></div>
<div class="a" style="left:0;top:680px;width:22px;height:1px;background:#c6c6c6"></div>
<div class="a" style="left:22px;top:709px;width:1533px;height:1px;background:#dadada"></div>
<div class="a" style="left:0;top:709px;width:22px;height:1px;background:#c6c6c6"></div>
<div class="a" style="left:22px;top:739px;width:1533px;height:1px;background:#dadada"></div>
<div class="a" style="left:0;top:739px;width:22px;height:1px;background:#c6c6c6"></div>
<div class="a" style="left:22px;top:768px;width:1533px;height:1px;background:#dadada"></div>
<div class="a" style="left:0;top:768px;width:22px;height:1px;background:#c6c6c6"></div>
<div class="a" style="left:22px;top:797px;width:1533px;height:1px;background:#dadada"></div>
<div class="a" style="left:0;top:797px;width:22px;height:1px;background:#c6c6c6"></div>
<div class="a" style="left:22px;top:827px;width:1533px;height:1px;background:#dadada"></div>
<div class="a" style="left:0;top:827px;width:22px;height:1px;background:#c6c6c6"></div>
<div class="a" style="left:22px;top:856px;width:1533px;height:1px;background:#dadada"></div>
<div class="a" style="left:0;top:856px;width:22px;height:1px;background:#c6c6c6"></div>
<div class="a" style="left:227px;top:329px;width:1px;height:505px;background:#dadada"></div>
<div class="a" style="left:442px;top:329px;width:1px;height:505px;background:#dadada"></div>
<div class="a" style="left:631px;top:329px;width:1px;height:505px;background:#dadada"></div>
<div class="a" style="left:847px;top:329px;width:1px;height:505px;background:#dadada"></div>
<div class="a" style="left:1047px;top:329px;width:1px;height:505px;background:#dadada"></div>
<div class="a" style="left:1246px;top:329px;width:1px;height:505px;background:#dadada"></div>
<div class="a" style="left:1401px;top:329px;width:1px;height:505px;background:#dadada"></div>
<div class="a" style="left:22px;top:299px;width:1533px;height:30px;background:#16a795;border-bottom:1.6px solid #1c4f47"></div>
<div class="a" style="left:0;top:299px;width:22px;height:30px;background:#d3d3d3;border-right:2px solid #1e6e45"></div>
<div class="a" style="left:0;top:328px;width:22px;height:1px;background:#c6c6c6"></div>
<div class="a" style="left:226.5px;top:299px;width:1.5px;height:30px;background:#13564c"></div>
<div class="a" style="left:441.5px;top:299px;width:1.5px;height:30px;background:#13564c"></div>
<div class="a" style="left:630.5px;top:299px;width:1.5px;height:30px;background:#13564c"></div>
<div class="a" style="left:846.5px;top:299px;width:1.5px;height:30px;background:#13564c"></div>
<div class="a" style="left:1046.5px;top:299px;width:1.5px;height:30px;background:#13564c"></div>
<div class="a" style="left:1245.5px;top:299px;width:1.5px;height:30px;background:#13564c"></div>
<div class="a" style="left:1400.5px;top:299px;width:1.5px;height:30px;background:#13564c"></div>
<div class="a" style="left:22px;top:299px;width:184px;height:28px;overflow:hidden"><div class="t hd" style="left:1px;top:5px;width:205px;text-align:center;">Contract Number</div></div>
<div class="a" style="left:227px;top:299px;width:194px;height:28px;overflow:hidden"><div class="t hd" style="left:1px;top:5px;width:215px;text-align:center;">Customer Number</div></div>
<div class="a" style="left:442px;top:299px;width:168px;height:28px;overflow:hidden"><div class="t hd" style="left:1px;top:5px;width:189px;text-align:center;">Customer Name</div></div>
<div class="a" style="left:631px;top:299px;width:195px;height:28px;overflow:hidden"><div class="t hd" style="left:1px;top:5px;width:216px;text-align:center;">Product category</div></div>
<div class="a" style="left:847px;top:299px;width:179px;height:28px;overflow:hidden"><div class="t hd" style="left:1px;top:5px;width:200px;text-align:center;">Product name</div></div>
<div class="a" style="left:1047px;top:299px;width:178px;height:28px;overflow:hidden"><div class="t hd" style="left:1px;top:5px;width:199px;text-align:center;letter-spacing:0.45px;">Total sales amount</div></div>
<div class="a" style="left:1246px;top:299px;width:134px;height:28px;overflow:hidden"><div class="t hd" style="left:1px;top:5px;width:155px;text-align:center;">Purchase date</div></div>
<div class="t hd" style="left:1424px;top:304px">Salesperson&#39;s employee</div>
<div class="a fb" style="left:205.5px;top:307px"><i></i></div>
<div class="a fb" style="left:420.5px;top:307px"><i></i></div>
<div class="a fb" style="left:609.5px;top:307px"><i></i></div>
<div class="a fb" style="left:825.5px;top:307px"><i></i></div>
<div class="a fb" style="left:1025.5px;top:307px"><i></i></div>
<div class="a fb" style="left:1224.5px;top:307px"><i></i></div>
<div class="a fb" style="left:1379.5px;top:307px"><i></i></div>
<div class="a" style="left:846px;top:298px;width:201px;height:32px;border:1.5px solid #15332a"></div>
<div class="a" style="left:847.5px;top:299.5px;width:198px;height:29px;border:1px solid #8ff5e3"></div>
<div class="a" style="left:1043.5px;top:326.5px;width:5.5px;height:5.5px;background:#2d5a45;border:1px solid #e8fff8"></div>
<div class="t rn" style="left:-9.5px;top:306.8px;width:30px;text-align:center">1</div>
<div class="t rn" style="left:-9.5px;top:335.8px;width:30px;text-align:center">2</div>
<div class="t rn" style="left:-9.5px;top:364.8px;width:30px;text-align:center">3</div>
<div class="t rn" style="left:-9.5px;top:394.8px;width:30px;text-align:center">4</div>
<div class="t rn" style="left:-9.5px;top:423.8px;width:30px;text-align:center">5</div>
<div class="t rn" style="left:-9.5px;top:452.8px;width:30px;text-align:center">6</div>
<div class="t rn" style="left:-9.5px;top:482.8px;width:30px;text-align:center">7</div>
<div class="t rn" style="left:-9.5px;top:511.8px;width:30px;text-align:center">8</div>
<div class="t rn" style="left:-9.5px;top:540.8px;width:30px;text-align:center">9</div>
<div class="t rn" style="left:-8.3px;top:570.8px;width:30px;text-align:center">10</div>
<div class="t rn" style="left:-8.3px;top:599.8px;width:30px;text-align:center">11</div>
<div class="t rn" style="left:-8.3px;top:628.8px;width:30px;text-align:center">12</div>
<div class="t rn" style="left:-8.3px;top:658.8px;width:30px;text-align:center">13</div>
<div class="t rn" style="left:-8.3px;top:687.8px;width:30px;text-align:center">14</div>
<div class="t rn" style="left:-8.3px;top:716.8px;width:30px;text-align:center">15</div>
<div class="t rn" style="left:-8.3px;top:746.8px;width:30px;text-align:center">16</div>
<div class="t rn" style="left:-8.3px;top:775.8px;width:30px;text-align:center">17</div>
<div class="t rn" style="left:-8.3px;top:804.8px;width:30px;text-align:center">18</div>
<div class="t rn" style="left:-8.3px;top:834.8px;width:30px;text-align:center">19</div>
<div class="t cd" style="left:22.09px;top:335.2px;width:205px;text-align:center;letter-spacing:0.175px;">CT002801</div>
<div class="t cd" style="left:227.00px;top:335.2px;width:215px;text-align:center;letter-spacing:0.000px;">KN00813</div>
<div class="t cd" style="left:441.98px;top:335.2px;width:189px;text-align:center;letter-spacing:-0.045px;">Xailee</div>
<div class="t cd" style="left:631.22px;top:335.2px;width:216px;text-align:center;letter-spacing:0.433px;">Photographic equipment</div>
<div class="t cd" style="left:847.03px;top:335.2px;width:200px;text-align:center;letter-spacing:0.063px;">video camera</div>
<div class="t cd" style="left:1047.00px;top:335.2px;width:199px;text-align:center;letter-spacing:0.000px;">498</div>
<div class="t cd" style="left:1245.87px;top:335.2px;width:155px;text-align:center;letter-spacing:-0.270px;">9-Jul-2021</div>
<div class="a" style="left:1536px;top:328px;width:18.6px;height:28px;overflow:hidden"><div class="t cd" style="left:7.3px;top:7.2px">S</div></div>
<div class="t cd" style="left:22.09px;top:364.2px;width:205px;text-align:center;letter-spacing:0.175px;">CT002802</div>
<div class="t cd" style="left:227.00px;top:364.2px;width:215px;text-align:center;letter-spacing:0.000px;">KN00691</div>
<div class="t cd" style="left:442.08px;top:364.2px;width:189px;text-align:center;letter-spacing:0.153px;">Urbano</div>
<div class="t cd" style="left:631.23px;top:364.2px;width:216px;text-align:center;letter-spacing:0.462px;">Musical instrument</div>
<div class="t cd" style="left:847.03px;top:364.2px;width:200px;text-align:center;letter-spacing:0.057px;">Cymbals</div>
<div class="t cd" style="left:1047.00px;top:364.2px;width:199px;text-align:center;letter-spacing:0.000px;">152</div>
<div class="t cd" style="left:1245.86px;top:364.2px;width:155px;text-align:center;letter-spacing:-0.281px;">10-Jul-2021</div>
<div class="a" style="left:1536px;top:357px;width:18.6px;height:28px;overflow:hidden"><div class="t cd" style="left:7.3px;top:7.2px">Sh</div></div>
<div class="t cd" style="left:22.09px;top:394.2px;width:205px;text-align:center;letter-spacing:0.175px;">CT002803</div>
<div class="t cd" style="left:227.00px;top:394.2px;width:215px;text-align:center;letter-spacing:0.000px;">KN00427</div>
<div class="t cd" style="left:442.22px;top:394.2px;width:189px;text-align:center;letter-spacing:0.431px;">Shalena</div>
<div class="t cd" style="left:631.23px;top:394.2px;width:216px;text-align:center;letter-spacing:0.462px;">Musical instrument</div>
<div class="t cd" style="left:846.95px;top:394.2px;width:200px;text-align:center;letter-spacing:-0.105px;">Wood Block</div>
<div class="t cd" style="left:1047.00px;top:394.2px;width:199px;text-align:center;letter-spacing:0.000px;">230</div>
<div class="t cd" style="left:1245.86px;top:394.2px;width:155px;text-align:center;letter-spacing:-0.279px;">8-Aug-2021</div>
<div class="a" style="left:1536px;top:387px;width:18.6px;height:28px;overflow:hidden"><div class="t cd" style="left:7.3px;top:7.2px">S</div></div>
<div class="t cd" style="left:22.09px;top:423.2px;width:205px;text-align:center;letter-spacing:0.175px;">CT002804</div>
<div class="t cd" style="left:227.00px;top:423.2px;width:215px;text-align:center;letter-spacing:0.000px;">KN00415</div>
<div class="t cd" style="left:442.04px;top:423.2px;width:189px;text-align:center;letter-spacing:0.077px;">Sixto</div>
<div class="t cd" style="left:631.22px;top:423.2px;width:216px;text-align:center;letter-spacing:0.433px;">Photographic equipment</div>
<div class="t cd" style="left:847.03px;top:423.2px;width:200px;text-align:center;letter-spacing:0.063px;">wide-angle lens</div>
<div class="t cd" style="left:1047.00px;top:423.2px;width:199px;text-align:center;letter-spacing:0.000px;">203</div>
<div class="t cd" style="left:1245.86px;top:423.2px;width:155px;text-align:center;letter-spacing:-0.279px;">9-Aug-2021</div>
<div class="a" style="left:1536px;top:416px;width:18.6px;height:28px;overflow:hidden"><div class="t cd" style="left:7.3px;top:7.2px">S</div></div>
<div class="t cd" style="left:22.09px;top:452.2px;width:205px;text-align:center;letter-spacing:0.175px;">CT002805</div>
<div class="t cd" style="left:227.00px;top:452.2px;width:215px;text-align:center;letter-spacing:0.000px;">KN00161</div>
<div class="t cd" style="left:442.00px;top:452.2px;width:189px;text-align:center;letter-spacing:0.002px;">Romero</div>
<div class="t cd" style="left:631.22px;top:452.2px;width:216px;text-align:center;letter-spacing:0.433px;">Photographic equipment</div>
<div class="t cd" style="left:847.30px;top:452.2px;width:200px;text-align:center;letter-spacing:0.603px;">shutter release</div>
<div class="t cd" style="left:1047.00px;top:452.2px;width:199px;text-align:center;letter-spacing:0.000px;">487</div>
<div class="t cd" style="left:1245.86px;top:452.2px;width:155px;text-align:center;letter-spacing:-0.290px;">10-Aug-2021</div>
<div class="a" style="left:1536px;top:445px;width:18.6px;height:28px;overflow:hidden"><div class="t cd" style="left:7.3px;top:7.2px">Sh</div></div>
<div class="t cd" style="left:22.09px;top:482.2px;width:205px;text-align:center;letter-spacing:0.175px;">CT002806</div>
<div class="t cd" style="left:227.00px;top:482.2px;width:215px;text-align:center;letter-spacing:0.000px;">KN00686</div>
<div class="t cd" style="left:442.17px;top:482.2px;width:189px;text-align:center;letter-spacing:0.336px;">Yutaka</div>
<div class="t cd" style="left:631.22px;top:482.2px;width:216px;text-align:center;letter-spacing:0.433px;">Photographic equipment</div>
<div class="t cd" style="left:847.07px;top:482.2px;width:200px;text-align:center;letter-spacing:0.135px;">zoom lens</div>
<div class="t cd" style="left:1047.00px;top:482.2px;width:199px;text-align:center;letter-spacing:0.000px;">161</div>
<div class="t cd" style="left:1245.89px;top:482.2px;width:155px;text-align:center;letter-spacing:-0.229px;">11-Aug-2021</div>
<div class="a" style="left:1536px;top:475px;width:18.6px;height:28px;overflow:hidden"><div class="t cd" style="left:7.3px;top:7.2px">Sh</div></div>
<div class="t cd" style="left:22.09px;top:511.2px;width:205px;text-align:center;letter-spacing:0.175px;">CT002807</div>
<div class="t cd" style="left:227.00px;top:511.2px;width:215px;text-align:center;letter-spacing:0.000px;">KN00945</div>
<div class="t cd" style="left:442.17px;top:511.2px;width:189px;text-align:center;letter-spacing:0.346px;">Winston</div>
<div class="t cd" style="left:631.23px;top:511.2px;width:216px;text-align:center;letter-spacing:0.462px;">Musical instrument</div>
<div class="t cd" style="left:846.95px;top:511.2px;width:200px;text-align:center;letter-spacing:-0.105px;">Wood Block</div>
<div class="t cd" style="left:1047.00px;top:511.2px;width:199px;text-align:center;letter-spacing:0.000px;">261</div>
<div class="t cd" style="left:1245.86px;top:511.2px;width:155px;text-align:center;letter-spacing:-0.290px;">12-Aug-2021</div>
<div class="a" style="left:1536px;top:504px;width:18.6px;height:28px;overflow:hidden"><div class="t cd" style="left:7.3px;top:7.2px">Sh</div></div>
<div class="t cd" style="left:22.09px;top:540.2px;width:205px;text-align:center;letter-spacing:0.175px;">CT002808</div>
<div class="t cd" style="left:227.00px;top:540.2px;width:215px;text-align:center;letter-spacing:0.000px;">KN00287</div>
<div class="t cd" style="left:442.07px;top:540.2px;width:189px;text-align:center;letter-spacing:0.147px;">Uchenna</div>
<div class="t cd" style="left:631.22px;top:540.2px;width:216px;text-align:center;letter-spacing:0.433px;">Photographic equipment</div>
<div class="t cd" style="left:847.03px;top:540.2px;width:200px;text-align:center;letter-spacing:0.063px;">wide-angle lens</div>
<div class="t cd" style="left:1047.00px;top:540.2px;width:199px;text-align:center;letter-spacing:0.000px;">285</div>
<div class="t cd" style="left:1245.86px;top:540.2px;width:155px;text-align:center;letter-spacing:-0.290px;">13-Aug-2021</div>
<div class="a" style="left:1536px;top:533px;width:18.6px;height:28px;overflow:hidden"><div class="t cd" style="left:7.3px;top:7.2px">Sh</div></div>
<div class="t cd" style="left:22.09px;top:570.2px;width:205px;text-align:center;letter-spacing:0.175px;">CT002809</div>
<div class="t cd" style="left:227.00px;top:570.2px;width:215px;text-align:center;letter-spacing:0.000px;">KN00875</div>
<div class="t cd" style="left:441.91px;top:570.2px;width:189px;text-align:center;letter-spacing:-0.180px;">Xaveon</div>
<div class="t cd" style="left:631.22px;top:570.2px;width:216px;text-align:center;letter-spacing:0.433px;">Photographic equipment</div>
<div class="t cd" style="left:847.30px;top:570.2px;width:200px;text-align:center;letter-spacing:0.603px;">shutter release</div>
<div class="t cd" style="left:1047.00px;top:570.2px;width:199px;text-align:center;letter-spacing:0.000px;">346</div>
<div class="t cd" style="left:1245.86px;top:570.2px;width:155px;text-align:center;letter-spacing:-0.290px;">14-Aug-2021</div>
<div class="a" style="left:1536px;top:563px;width:18.6px;height:28px;overflow:hidden"><div class="t cd" style="left:7.3px;top:7.2px">S</div></div>
<div class="t cd" style="left:22.09px;top:599.2px;width:205px;text-align:center;letter-spacing:0.175px;">CT002810</div>
<div class="t cd" style="left:227.00px;top:599.2px;width:215px;text-align:center;letter-spacing:0.000px;">KN00329</div>
<div class="t cd" style="left:441.94px;top:599.2px;width:189px;text-align:center;letter-spacing:-0.112px;">Whitley</div>
<div class="t cd" style="left:631.22px;top:599.2px;width:216px;text-align:center;letter-spacing:0.433px;">Photographic equipment</div>
<div class="t cd" style="left:847.07px;top:599.2px;width:200px;text-align:center;letter-spacing:0.135px;">zoom lens</div>
<div class="t cd" style="left:1047.00px;top:599.2px;width:199px;text-align:center;letter-spacing:0.000px;">103</div>
<div class="t cd" style="left:1245.86px;top:599.2px;width:155px;text-align:center;letter-spacing:-0.290px;">15-Aug-2021</div>
<div class="a" style="left:1536px;top:592px;width:18.6px;height:28px;overflow:hidden"><div class="t cd" style="left:7.3px;top:7.2px">Sh</div></div>
<div class="t cd" style="left:22.13px;top:628.2px;width:205px;text-align:center;letter-spacing:0.258px;">CT002811</div>
<div class="t cd" style="left:227.00px;top:628.2px;width:215px;text-align:center;letter-spacing:0.000px;">KN00219</div>
<div class="t cd" style="left:441.85px;top:628.2px;width:189px;text-align:center;letter-spacing:-0.294px;">Ura</div>
<div class="t cd" style="left:631.23px;top:628.2px;width:216px;text-align:center;letter-spacing:0.462px;">Musical instrument</div>
<div class="t cd" style="left:846.98px;top:628.2px;width:200px;text-align:center;letter-spacing:-0.042px;">Accordion</div>
<div class="t cd" style="left:1047.00px;top:628.2px;width:199px;text-align:center;letter-spacing:0.000px;">335</div>
<div class="t cd" style="left:1245.86px;top:628.2px;width:155px;text-align:center;letter-spacing:-0.290px;">16-Aug-2021</div>
<div class="a" style="left:1536px;top:621px;width:18.6px;height:28px;overflow:hidden"><div class="t cd" style="left:7.3px;top:7.2px">Sh</div></div>
<div class="t cd" style="left:22.09px;top:658.2px;width:205px;text-align:center;letter-spacing:0.175px;">CT002812</div>
<div class="t cd" style="left:227.00px;top:658.2px;width:215px;text-align:center;letter-spacing:0.000px;">KN00237</div>
<div class="t cd" style="left:442.00px;top:658.2px;width:189px;text-align:center;letter-spacing:0.001px;">Xitlaly</div>
<div class="t cd" style="left:631.23px;top:658.2px;width:216px;text-align:center;letter-spacing:0.462px;">Musical instrument</div>
<div class="t cd" style="left:847.19px;top:658.2px;width:200px;text-align:center;letter-spacing:0.379px;">Piano</div>
<div class="t cd" style="left:1047.00px;top:658.2px;width:199px;text-align:center;letter-spacing:0.000px;">399</div>
<div class="t cd" style="left:1245.87px;top:658.2px;width:155px;text-align:center;letter-spacing:-0.270px;">1-Jul-2021</div>
<div class="a" style="left:1536px;top:651px;width:18.6px;height:28px;overflow:hidden"><div class="t cd" style="left:7.3px;top:7.2px">S</div></div>
<div class="t cd" style="left:22.09px;top:687.2px;width:205px;text-align:center;letter-spacing:0.175px;">CT002813</div>
<div class="t cd" style="left:227.00px;top:687.2px;width:215px;text-align:center;letter-spacing:0.000px;">KN00570</div>
<div class="t cd" style="left:442.26px;top:687.2px;width:189px;text-align:center;letter-spacing:0.512px;">Waris</div>
<div class="t cd" style="left:631.23px;top:687.2px;width:216px;text-align:center;letter-spacing:0.462px;">Musical instrument</div>
<div class="t cd" style="left:847.14px;top:687.2px;width:200px;text-align:center;letter-spacing:0.277px;">Electric Guitar</div>
<div class="t cd" style="left:1047.00px;top:687.2px;width:199px;text-align:center;letter-spacing:0.000px;">482</div>
<div class="t cd" style="left:1245.87px;top:687.2px;width:155px;text-align:center;letter-spacing:-0.270px;">2-Jul-2021</div>
<div class="a" style="left:1536px;top:680px;width:18.6px;height:28px;overflow:hidden"><div class="t cd" style="left:7.3px;top:7.2px">Sh</div></div>
<div class="t cd" style="left:22.09px;top:716.2px;width:205px;text-align:center;letter-spacing:0.175px;">CT002814</div>
<div class="t cd" style="left:227.00px;top:716.2px;width:215px;text-align:center;letter-spacing:0.000px;">KN00830</div>
<div class="t cd" style="left:442.14px;top:716.2px;width:189px;text-align:center;letter-spacing:0.278px;">Vandella</div>
<div class="t cd" style="left:631.23px;top:716.2px;width:216px;text-align:center;letter-spacing:0.462px;">Musical instrument</div>
<div class="t cd" style="left:846.90px;top:716.2px;width:200px;text-align:center;letter-spacing:-0.195px;">Violin</div>
<div class="t cd" style="left:1047.00px;top:716.2px;width:199px;text-align:center;letter-spacing:0.000px;">131</div>
<div class="t cd" style="left:1245.87px;top:716.2px;width:155px;text-align:center;letter-spacing:-0.270px;">3-Jul-2021</div>
<div class="a" style="left:1536px;top:709px;width:18.6px;height:28px;overflow:hidden"><div class="t cd" style="left:7.3px;top:7.2px">S</div></div>
<div class="t cd" style="left:22.09px;top:746.2px;width:205px;text-align:center;letter-spacing:0.175px;">CT002815</div>
<div class="t cd" style="left:227.00px;top:746.2px;width:215px;text-align:center;letter-spacing:0.000px;">KN00939</div>
<div class="t cd" style="left:442.01px;top:746.2px;width:189px;text-align:center;letter-spacing:0.022px;">Salwa</div>
<div class="t cd" style="left:631.23px;top:746.2px;width:216px;text-align:center;letter-spacing:0.462px;">Musical instrument</div>
<div class="t cd" style="left:847.25px;top:746.2px;width:200px;text-align:center;letter-spacing:0.497px;">Orchestral Harp</div>
<div class="t cd" style="left:1047.00px;top:746.2px;width:199px;text-align:center;letter-spacing:0.000px;">446</div>
<div class="t cd" style="left:1245.87px;top:746.2px;width:155px;text-align:center;letter-spacing:-0.270px;">1-Jul-2021</div>
<div class="a" style="left:1536px;top:739px;width:18.6px;height:28px;overflow:hidden"><div class="t cd" style="left:7.3px;top:7.2px">Sh</div></div>
<div class="t cd" style="left:22.09px;top:775.2px;width:205px;text-align:center;letter-spacing:0.175px;">CT002816</div>
<div class="t cd" style="left:227.00px;top:775.2px;width:215px;text-align:center;letter-spacing:0.000px;">KN00378</div>
<div class="t cd" style="left:442.25px;top:775.2px;width:189px;text-align:center;letter-spacing:0.505px;">Yatana</div>
<div class="t cd" style="left:631.22px;top:775.2px;width:216px;text-align:center;letter-spacing:0.433px;">Photographic equipment</div>
<div class="t cd" style="left:847.03px;top:775.2px;width:200px;text-align:center;letter-spacing:0.063px;">video camera</div>
<div class="t cd" style="left:1047.00px;top:775.2px;width:199px;text-align:center;letter-spacing:0.000px;">379</div>
<div class="t cd" style="left:1245.86px;top:775.2px;width:155px;text-align:center;letter-spacing:-0.279px;">1-Aug-2021</div>
<div class="a" style="left:1536px;top:768px;width:18.6px;height:28px;overflow:hidden"><div class="t cd" style="left:7.3px;top:7.2px">S</div></div>
<div class="t cd" style="left:22.09px;top:804.2px;width:205px;text-align:center;letter-spacing:0.175px;">CT002817</div>
<div class="t cd" style="left:227.00px;top:804.2px;width:215px;text-align:center;letter-spacing:0.000px;">KN00342</div>
<div class="t cd" style="left:442.11px;top:804.2px;width:189px;text-align:center;letter-spacing:0.217px;">Vianey</div>
<div class="t cd" style="left:631.22px;top:804.2px;width:216px;text-align:center;letter-spacing:0.433px;">Photographic equipment</div>
<div class="t cd" style="left:847.17px;top:804.2px;width:200px;text-align:center;letter-spacing:0.334px;">tripod</div>
<div class="t cd" style="left:1047.00px;top:804.2px;width:199px;text-align:center;letter-spacing:0.000px;">424</div>
<div class="t cd" style="left:1245.86px;top:804.2px;width:155px;text-align:center;letter-spacing:-0.279px;">2-Aug-2021</div>
<div class="a" style="left:1536px;top:797px;width:18.6px;height:28px;overflow:hidden"><div class="t cd" style="left:7.3px;top:7.2px">S</div></div>
</div>
<div class="a" style="left:1555.0px;top:275.0px;width:13.0px;height:559.0px;background:#e9e9e9"></div>
<div class="a" style="left:1559.5px;top:317.0px;width:8.5px;height:499.0px;background:#d4d4d4"></div>
<div class="a" style="left:1559.0px;top:277.0px;width:17.0px;height:19.5px;background:#fff;border:1px solid #777"></div>
<svg class="a" style="left:1563.0px;top:284.0px;" width="6" height="5" viewBox="0 0 6 5" fill="none"><path d="M0 5 L6 5 L6 0 Z" fill="#555"/></svg>
<div class="a" style="left:1559.0px;top:296.0px;width:17.0px;height:21.0px;background:#fff;border:1px solid #888"></div>
<div class="a" style="left:1559.0px;top:816.0px;width:17.0px;height:18.0px;background:#fff;border:1px solid #888"></div>
<svg class="a" style="left:1563.0px;top:822.0px;" width="6" height="5" viewBox="0 0 6 5" fill="none"><path d="M0 0 L6 0 L6 5 Z" fill="#555"/></svg>
<div class="a" style="left:0.0px;top:833.5px;width:1568.0px;height:29.5px;background:#e8e8e8;border-top:1px solid #bdbdbd"></div>
<div class="a" style="left:1140.0px;top:834.5px;width:428.0px;height:28.5px;background:#d8d8d8"></div>
<svg class="a" style="left:16.0px;top:843.0px;" width="7" height="10" viewBox="0 0 7 10" fill="none"><path d="M6 0 V10 L0 5 Z" fill="#c4c4c4"/></svg>
<svg class="a" style="left:45.0px;top:843.0px;" width="7" height="10" viewBox="0 0 7 10" fill="none"><path d="M0 0 V10 L6 5 Z" fill="#c4c4c4"/></svg>
<div class="a" style="left:93.5px;top:833.5px;width:79.0px;height:26.5px;background:#fff;border-left:1px solid #bdbdbd;border-right:1px solid #bdbdbd;border-bottom:2px solid #1e6e45"></div>
<div class="t" style="left:105.3px;top:837.2px;font-size:16.3px;color:#1c5a3a;font-weight:700;font-family:'Liberation Sans',sans-serif;letter-spacing:0.141px;">Sheet1</div>
<svg class="a" style="left:205.5px;top:838.5px;" width="21" height="21" viewBox="0 0 21 21" fill="none"><circle cx="10.5" cy="10.5" r="9.6" stroke="#6a6a6a" stroke-width="1.3"/><path d="M10.5 5 V16 M5 10.5 H16" stroke="#555" stroke-width="1.5"/></svg>
<div class="a" style="left:941.5px;top:842.0px;width:3.0px;height:3.0px;background:#a5a5a5"></div>
<div class="a" style="left:941.5px;top:847.0px;width:3.0px;height:3.0px;background:#a5a5a5"></div>
<div class="a" style="left:941.5px;top:852.0px;width:3.0px;height:3.0px;background:#a5a5a5"></div>
<div class="a" style="left:960.4px;top:839.3px;width:18.2px;height:17.9px;background:#fff;border:1px solid #6f6f6f"></div>
<svg class="a" style="left:965.0px;top:843.0px;" width="6" height="10" viewBox="0 0 6 10" fill="none"><path d="M6 0 V10 L0 5 Z" fill="#555"/></svg>
<div class="a" style="left:977.6px;top:839.3px;width:162.4px;height:17.9px;background:#fff;border:1px solid #6f6f6f;border-left-width:1.5px"></div>
<div class="a" style="left:1537.0px;top:839.3px;width:18.3px;height:17.9px;background:#fff;border:1px solid #6f6f6f"></div>
<svg class="a" style="left:1544.0px;top:843.0px;" width="6" height="10" viewBox="0 0 6 10" fill="none"><path d="M0 0 V10 L6 5 Z" fill="#555"/></svg>
<div class="a" style="left:0.0px;top:863.0px;width:1568.0px;height:19.0px;background:#f1f1f1;border-top:1px solid #d6d6d6"></div>
<div class="t" style="left:0.0px;top:871.8px;font-size:12px;color:#555;font-weight:400;font-family:'Liberation Sans',sans-serif;">Ready</div>
<svg class="a" style="left:60.0px;top:869.5px;" width="18" height="14" viewBox="0 0 18 14" fill="none"><rect x="0.7" y="0.7" width="16.6" height="14" stroke="#666" stroke-width="1.3"/><path d="M0.7 4 H17.3" stroke="#666" stroke-width="1.3"/><path d="M3 7 H5 M3 10 H5" stroke="#666" stroke-width="1"/><circle cx="12" cy="11" r="4" stroke="#666" stroke-width="1.3" fill="#f1f1f1"/><circle cx="12" cy="11" r="2" fill="#333"/></svg>
<div class="a" style="left:1191.0px;top:864.0px;width:50.0px;height:18.0px;background:#d4d4d4"></div>
<svg class="a" style="left:1206.5px;top:868.0px;" width="18" height="16" viewBox="0 0 18 16" fill="none"><path d="M1 1 H17 V16 H1 Z M1 6 H17 M1 11 H17 M6.5 1 V16 M12 1 V16" stroke="#555" stroke-width="1.4" fill="none"/></svg>
<svg class="a" style="left:1258.0px;top:868.0px;" width="18" height="16" viewBox="0 0 18 16" fill="none"><rect x="1" y="1" width="16" height="15" stroke="#666" stroke-width="1.4"/><rect x="4.5" y="4.5" width="9" height="11" stroke="#666" stroke-width="1.1"/><path d="M6.5 8 H11.5 M6.5 11 H11.5" stroke="#666" stroke-width="1"/></svg>
<svg class="a" style="left:1308.0px;top:868.0px;" width="18" height="16" viewBox="0 0 18 16" fill="none"><path d="M1 16 V1 H17 V16 M7 1 V9 H11 V1" stroke="#666" stroke-width="1.4" fill="none"/></svg>
<div class="a" style="left:1349.0px;top:875.5px;width:10.0px;height:1.3px;background:#777"></div>
<div class="a" style="left:1365.6px;top:875.5px;width:126.1px;height:1.1px;background:#888"></div>
<div class="a" style="left:1426.8px;top:870.3px;width:4.8px;height:11.7px;background:#777"></div>
<svg class="a" style="left:1497.5px;top:870.0px;" width="11" height="11" viewBox="0 0 11 11" fill="none"><path d="M5.5 0 V11 M0 5.5 H11" stroke="#777" stroke-width="1.2"/></svg>
<div class="t" style="left:1524.6px;top:872.0px;font-size:12.4px;color:#666;font-weight:400;font-family:'Liberation Sans',sans-serif;letter-spacing:-0.179px;">100%</div>
<div class="a" style="left:1198.4px;top:291.2px;width:60.6px;height:60.6px;border-radius:50%;overflow:hidden"><div class="a" style="left:0;top:0;width:60.6px;height:7.800000000000011px;background:rgba(250,205,60,0.7)"></div><div class="a" style="left:0;top:7.800000000000011px;width:60.6px;height:30px;background:rgba(160,192,40,0.72)"></div><div class="a" style="left:0;top:37.80000000000001px;width:60.6px;height:22.79999999999999px;background:rgba(250,205,60,0.7)"></div><div class="a" style="left:26.59999999999991px;top:16.80000000000001px;width:20px;height:20px;background:#fbd56a"></div><div class="a" style="left:33.09999999999991px;top:25.80000000000001px;width:0;height:0;border-left:4px solid transparent;border-right:4px solid transparent;border-top:4px solid #b48f2c"></div></div>
<svg class="a" style="left:1228.0px;top:321.0px;" width="22" height="35" viewBox="0 0 22 35" fill="none"><path d="M1.5 1.5 V27.5 L7.5 21.5 L12.5 32.5 L17 30.5 L12 19.5 L20.5 19.5 Z" fill="#fff" stroke="#111" stroke-width="1.4" stroke-linejoin="round"/></svg>
</div>
</body></html>
